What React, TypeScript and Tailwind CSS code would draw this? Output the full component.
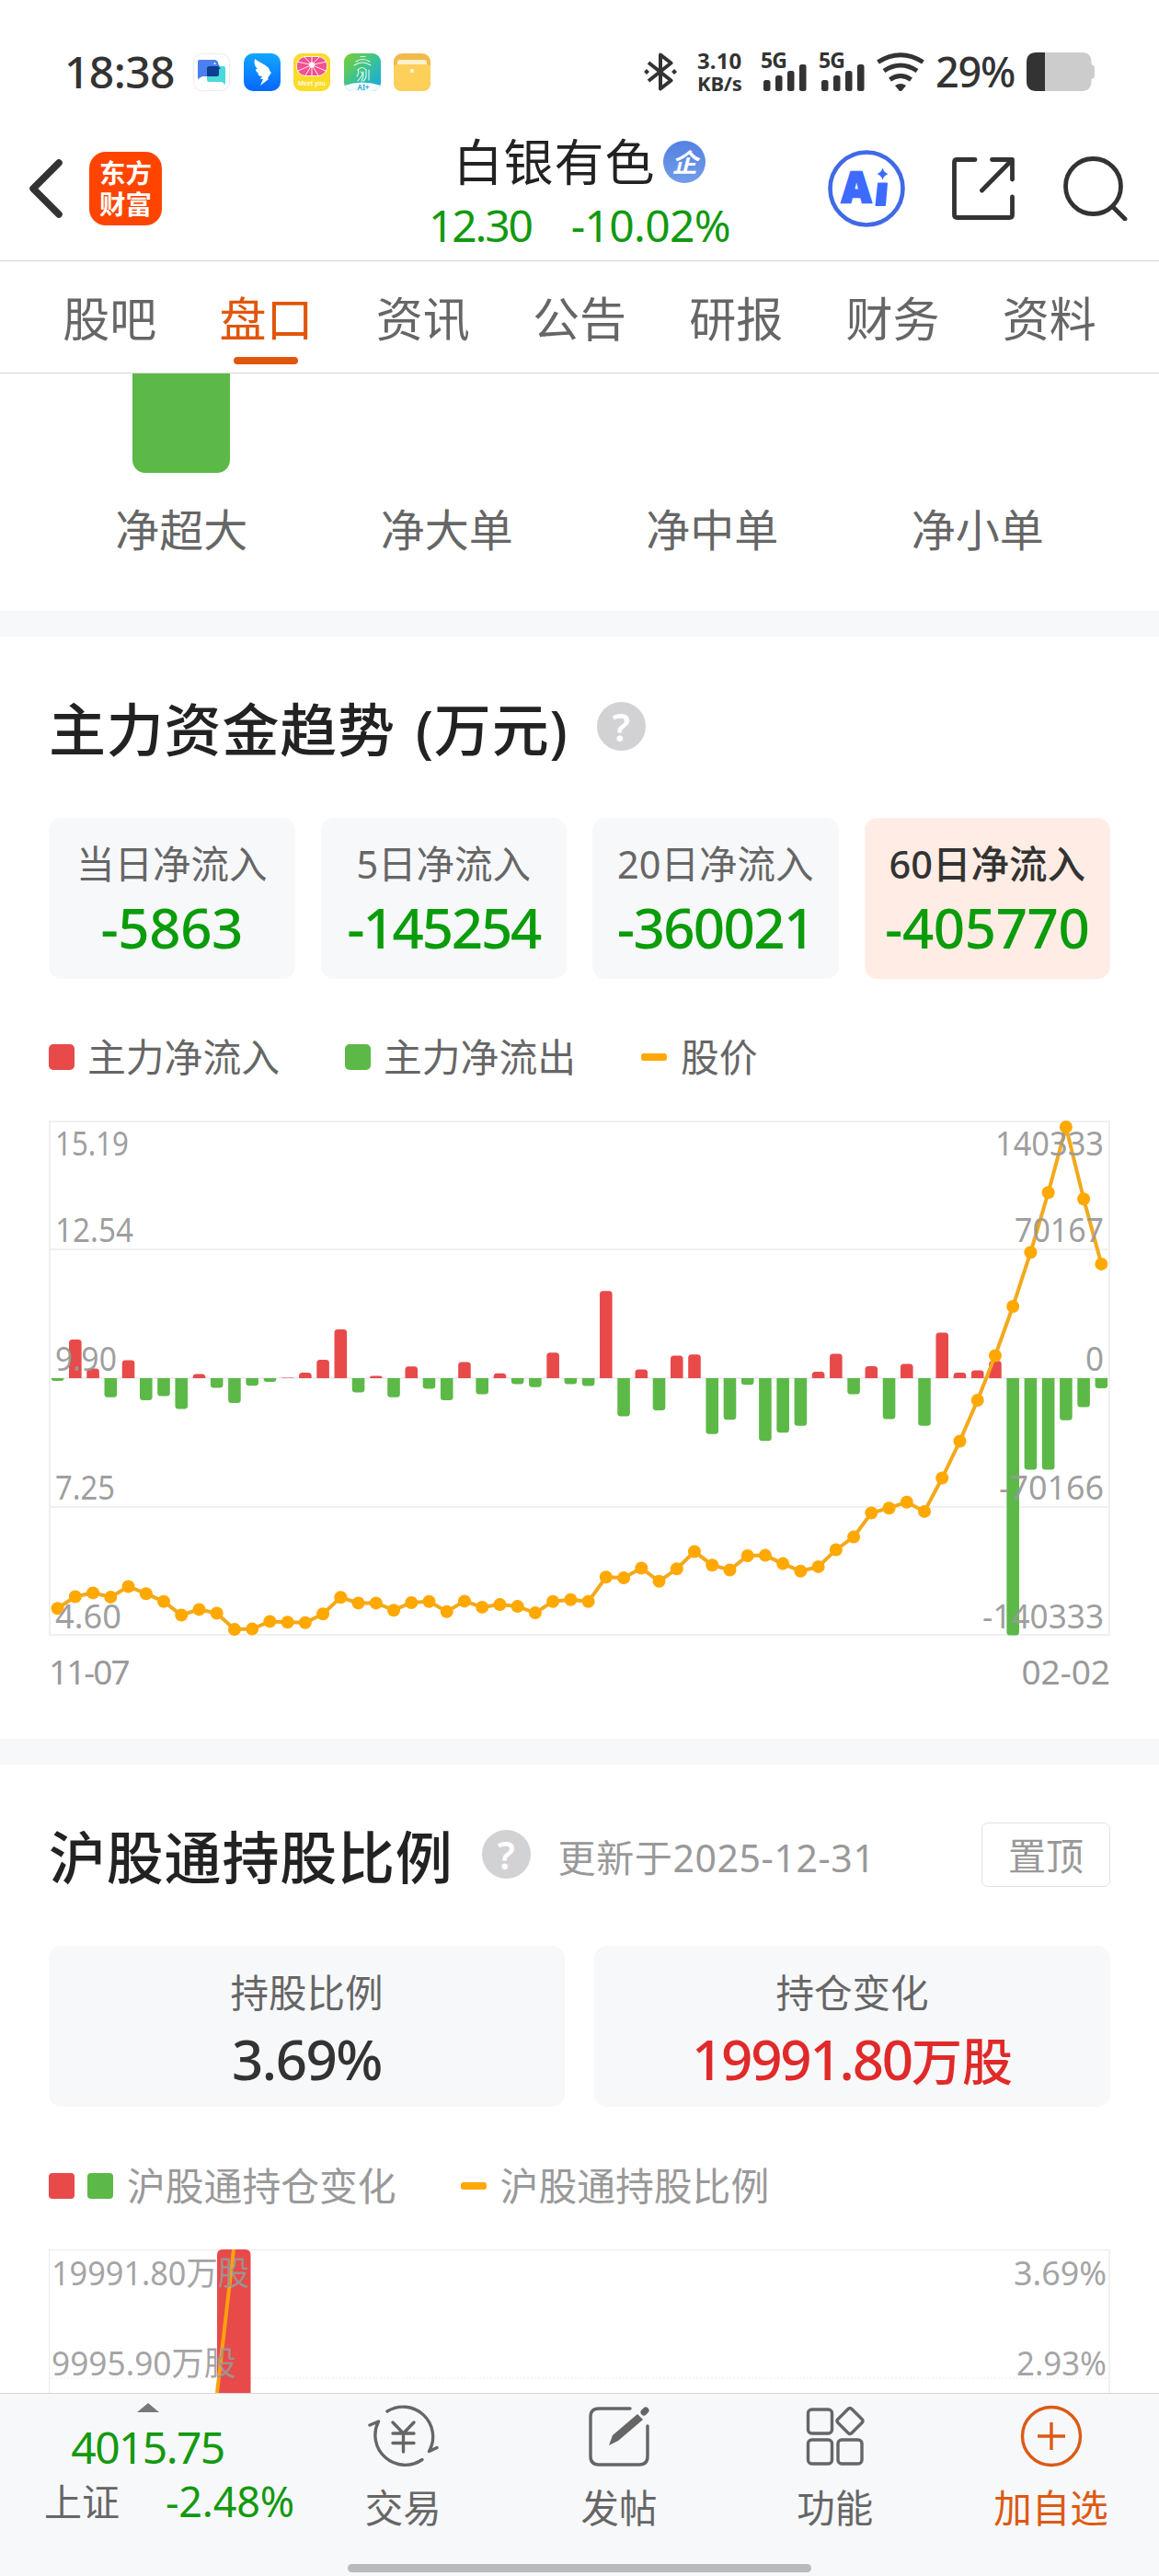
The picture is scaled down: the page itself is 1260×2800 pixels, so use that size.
import clsx from 'clsx';
import type { ReactNode } from 'react';

type Flow = { label: string; value: string; tracking: string; active?: boolean };

const TABS = ['股吧', '盘口', '资讯', '公告', '研报', '财务', '资料'];
const ORDER_SIZES = ['净超大', '净大单', '净中单', '净小单'];

const FLOWS: Flow[] = [
  { label: '当日净流入', value: '-5863', tracking: 'tracking-[-0.4px]' },
  { label: '5日净流入', value: '-145254', tracking: 'tracking-[-2.2px]' },
  { label: '20日净流入', value: '-360021', tracking: 'tracking-[-1.6px]' },
  { label: '60日净流入', value: '-405770', tracking: 'tracking-[-0.4px]', active: true },
];

// bar heights in chart pixels, positive = inflow
const BARS = [
  -2.9, 42, 10.6, -20.8, 19.6, -24, -19.6, -33.5, 4.5, -10.6, -26.9, -8.2, -4.1, 0.6, 6.1, 20, 53, -15.5, 2.4, -20.8,
  12.7, -11.4, -24, 17.6, -17.6, 5.3, -6.5, -9.8, 27.8, -6.5, -8.6, 94.7, -41.6, 9.4, -35.1, 24.5, 25.7, -60.8, -45.3, -7.3,
  -68.2, -59.2, -51.8, 6.9, 26.5, -17.6, 13.1, -44.5, 15.5, -51.8, 49.4, 6.1, 8.6, 18.8, -279.6, -99.6, -99.6, -45.7, -31.4, -11,
];

// y position of the share price for each day
const PRICE = [
  530.2, 517.5, 513.4, 517.9, 506.5, 514.2, 522.8, 537.5, 531.4, 535.5, 553, 552.6, 544.4, 545.3, 545.7, 536.3, 518.3, 524.4, 524.4, 532.2,
  524, 522.8, 533.8, 522.4, 528.9, 526.1, 528.1, 535.1, 522.8, 520.8, 522.8, 496.3, 497.1, 486.5, 500.8, 487.3, 468.5, 483.2, 488.5, 473,
  472.6, 481.6, 489.8, 484.9, 466.5, 452.6, 426.5, 421.2, 414.7, 424.9, 388.5, 348.5, 304, 255.5, 202, 143.2, 78.3, 6.9, 85.3, 155.9,
];

const AXIS = [
  { y: 38, left: '15.19', leftWidth: 80, right: '140333', rightWidth: 118 },
  { y: 132, left: '12.54', leftWidth: 85, right: '70167', rightWidth: 97 },
  { y: 272, left: '9.90', leftWidth: 67, right: '0', rightWidth: 20 },
  { y: 412, left: '7.25', leftWidth: 65, right: '-70166', rightWidth: 114 },
  { y: 552, left: '4.60', leftWidth: 72, right: '-140333', rightWidth: 132 },
];

const ZERO_Y = 280;
const dayX = (i: number) => 9.6 + i * 19.233;

function barPath(i: number, height: number): string {
  const x = dayX(i) - 6.8;
  const w = 13.6;
  const dir = height > 0 ? -1 : 1;
  const size = Math.abs(height);
  const r = Math.min(3.5, size);
  const end = ZERO_Y + dir * size;
  return `M${x} ${ZERO_Y}V${end - dir * r}Q${x} ${end} ${x + r} ${end}H${x + w - r}Q${x + w} ${end} ${x + w} ${end - dir * r}V${ZERO_Y}Z`;
}

function SignalBars() {
  return (
    <div className="flex h-[42px] w-[50px] flex-col">
      <span className="h-3 text-[23px] leading-[17px] font-bold tracking-[-0.8px]">5G</span>
      <svg viewBox="0 0 50 30" className="h-[30px] w-[50px] fill-[#333]">
        <rect x="3" y="18" width="7.5" height="12" rx="2.5" />
        <rect x="16" y="13" width="7.5" height="17" rx="2.5" />
        <rect x="29" y="8" width="7.5" height="22" rx="2.5" />
        <rect x="42" y="1" width="7.5" height="29" rx="2.5" />
      </svg>
    </div>
  );
}

function NotificationIcons() {
  return (
    <div className="ml-[21px] flex gap-[14.5px]">
      <svg viewBox="0 0 40 41" className="h-[41px] w-10">
        <rect x="0.5" y="0.5" width="39" height="40" rx="9" fill="#fff" stroke="#ececec" />
        <path d="M7 7h16q4 0 4.500 5l3 4v9H10l-5 3V9q0-2 2-2z" fill="#4b80ee" />
        <path d="M17 14h16q2 0 2 2v18l-4-3H17q-2 0-2-2V16q0-2 2-2z" fill="#4bd9dc" />
        <path d="M17 14h10.500l2.500 3h-2v6q0 2-2 2H15v-9q0-2 2-2z" fill="#0c3e94" />
        <circle cx="23.5" cy="11" r="1" fill="#fff" />
      </svg>
      <svg viewBox="0 0 40 41" className="h-[41px] w-10">
        <defs>
          <linearGradient id="wing" x1="0" y1="0" x2="0" y2="1">
            <stop offset="0" stopColor="#12a7ff" />
            <stop offset="1" stopColor="#0866ff" />
          </linearGradient>
        </defs>
        <rect width="40" height="41" rx="10" fill="url(#wing)" />
        <path d="M12 6c7 5 13 7 15 10 1 2 1 3 3 5l-4 6 1 1-9 7 3-7h-3l2-3c-3 0-4-1-5-3h2c-3-1-4-3-4-5h2c-3-3-4-6-3-11z" fill="#fff" />
      </svg>
      <svg viewBox="0 0 40 41" className="h-[41px] w-10">
        <rect width="40" height="41" rx="9" fill="#fbdc26" />
        <rect x="3" y="3" width="34" height="22" rx="10" fill="#fff4dc" />
        <rect x="4" y="4" width="32" height="20" rx="9" fill="#f5508f" />
        <path d="M20 12.500V4M20 12.500V24M20 12.500L4 9M20 12.500L36 9M20 12.500L5 19M20 12.500L35 19M20 12.500L12 4M20 12.500L28 4M20 12.500L13 24M20 12.500L27 24" stroke="#fff" strokeWidth="0.900" />
        <circle cx="20" cy="12.500" r="3" fill="#fff" />
        <text x="20" y="34.500" fontSize="7.500" fontWeight="600" fill="#fff" textAnchor="middle" textLength="30" lengthAdjust="spacingAndGlyphs">Meet you</text>
      </svg>
      <svg viewBox="0 0 40 41" className="h-[41px] w-10">
        <defs>
          <linearGradient id="finger" x1="0" y1="0" x2="1" y2="1">
            <stop offset="0" stopColor="#7ccf2d" />
            <stop offset="0.550" stopColor="#35c0a0" />
            <stop offset="1" stopColor="#15a3ec" />
          </linearGradient>
          <clipPath id="fingerClip">
            <rect width="40" height="41" rx="9" />
          </clipPath>
        </defs>
        <g clipPath="url(#fingerClip)">
          <rect width="40" height="41" fill="url(#finger)" />
          <path d="M0 35q20-7 40 0v6H0z" fill="#f4fbfd" />
        </g>
        <g fill="none" stroke="#e5faea" strokeWidth="1.100" strokeLinecap="round">
          <path d="M18 3.500h5M13 9q7-5 15 0M11 13q9-6 18 0M14 25q3-5 1-7 5-5 9 0v6q0 4-3 6M18 20q3 0 1 5l-4 5M27 18v11M21 20v5l-2 5" />
        </g>
        <text x="21" y="39.500" fontSize="8" fontWeight="600" fill="#1ba4d8" textAnchor="middle">AI+</text>
      </svg>
      <svg viewBox="0 0 40 41" className="h-[41px] w-10">
        <rect width="40" height="41" rx="9" fill="#f1ba4a" />
        <rect x="4" y="7" width="32" height="12" rx="3" fill="#fdf0cc" />
        <path d="M0 15q0-3 4-3h32q4 0 4 3v17q0 9-9 9H9q-9 0-9-9z" fill="#fed05a" />
        <circle cx="20" cy="19" r="2.200" fill="#fff3d0" />
      </svg>
    </div>
  );
}

function StatusBar() {
  return (
    <div className="flex h-[156px] items-center pr-[69px] pl-[70px] text-[#333]">
      <span className="w-[119px] text-[48px] leading-[60px] font-medium tracking-[-0.6px] whitespace-nowrap">18:38</span>
      <NotificationIcons />
      <svg viewBox="0 0 36 42" className="ml-auto h-[42px] w-9" fill="none" stroke="#333" strokeWidth="4" strokeLinejoin="round">
        <path d="M5 11l24.500 19.500L18 39.500v-37l11.500 9L5 31" />
        <path d="M3 18l3 3-3 3-3-3zM33 18l3 3-3 3-3-3z" fill="#333" stroke="none" />
      </svg>
      <div className="ml-[22px] flex w-[50px] flex-col text-[24px] leading-[24px] font-bold whitespace-nowrap">
        <span className="tracking-[0.100px]">3.10</span>
        <span className="text-[22px] tracking-[-0.200px]">KB/s</span>
      </div>
      <div className="ml-[19px] flex gap-[13px]">
        <SignalBars />
        <SignalBars />
      </div>
      <svg viewBox="0 0 52 42" className="ml-[13px] h-[42px] w-[52px]" fill="none" stroke="#333" strokeWidth="5">
        <path d="M1.500 10.500Q26-5 50.500 10.500" />
        <path d="M8 20Q26 8 44 20" />
        <path d="M14.500 29.500Q26 21.500 37.500 29.500" />
        <path d="M20 36q6-4 12 0l-4.500 5.500q-1.500 1-3 0z" fill="#333" stroke="none" />
      </svg>
      <span className="ml-3 w-[87px] text-[45px] leading-[60px] font-medium tracking-[-1.200px] whitespace-nowrap">29%</span>
      <svg viewBox="0 0 75 42" className="ml-[12px] h-[42px] w-[75px]">
        <path d="M11 0h49q10.500 0 10.500 11v2q3.500 1 3.500 4v8q0 3-3.500 4v2q0 11-10.500 11H11q-11 0-11-11V11Q0 0 11 0z" fill="#ccc" />
        <path d="M11 0h9v42h-9q-11 0-11-11V11Q0 0 11 0z" fill="#333" />
      </svg>
    </div>
  );
}

function Header() {
  return (
    <header className="grid h-[128px] grid-cols-[400px_460px_400px] grid-rows-[98px] items-center border-b border-[#d6d6d6]">
      <div className="flex items-center pl-[30px]">
        <svg viewBox="0 0 40 66" className="h-[66px] w-10" fill="none" stroke="#333" strokeWidth="7.500" strokeLinecap="round" strokeLinejoin="round">
          <path d="M34 5L6 33l28 28" />
        </svg>
        <div className="ml-[27px] flex h-20 w-[79px] flex-col items-center justify-center rounded-[18px] bg-[#ff4400] text-[28.5px] leading-[34px] font-bold text-white">
          <span>东方</span>
          <span>财富</span>
        </div>
      </div>
      <div className="-mt-[12px] flex flex-col items-center self-start whitespace-nowrap">
        <div className="flex h-16 items-center">
          <span className="text-[54px] leading-[64px] tracking-[0.900px] text-[#222]">白银有色</span>
          <span className="ml-[9px] flex size-[46px] items-center justify-center rounded-full bg-linear-to-b from-[#5480e2] to-[#729de9] text-[28px] leading-none font-bold text-white italic">
            企
          </span>
        </div>
        <div className="flex gap-[43px] text-[48px] leading-[73px] text-[#12990f]">
          <span className="tracking-[-2.200px]">12.30</span>
          <span className="tracking-[-0.700px]">-10.02%</span>
        </div>
      </div>
      <div className="flex items-center pl-10">
        <svg viewBox="0 0 84 84" className="size-[84px]">
          <circle cx="42" cy="42" r="39.500" fill="none" stroke="#4069e8" strokeWidth="4.600" />
          <text x="15" y="57" fontSize="46" fontWeight="900" fill="#3d6bff" stroke="#3d6bff" strokeWidth="2.500" textLength="32" lengthAdjust="spacingAndGlyphs">A</text>
          <path d="M55 36.500h9l-2 23.500H52.500z" fill="#3d6bff" stroke="#3d6bff" strokeWidth="2" strokeLinejoin="round" />
          <path d="M59.500 19.500q1.500 5 6 6.500-4.500 1.500-6 6.500-1.500-5-6-6.500 4.500-1.500 6-6.500z" fill="#3d6bff" />
        </svg>
        <svg viewBox="0 0 68 68" className="ml-[51px] size-[68px]" fill="none" stroke="#333" strokeWidth="4.800" strokeLinecap="round" strokeLinejoin="round">
          <path d="M25 2.500H5.500q-3 0-3 3v57q0 3 3 3h57q3 0 3-3V43M43.500 2.500h22V24M65 3L32.500 36" />
        </svg>
        <svg viewBox="0 0 70 70" className="ml-[53px] size-[70px]" fill="none" stroke="#333" strokeWidth="4.800" strokeLinecap="round">
          <circle cx="32.500" cy="32.500" r="30" />
          <path d="M54 55l13 13" />
        </svg>
      </div>
    </header>
  );
}

function TabBar() {
  return (
    <nav className="grid h-[122px] grid-cols-7 border-b border-[#d6d6d6] px-[34px] pt-8">
      {TABS.map((tab) => {
        const active = tab === '盘口';
        return (
          <div key={tab} className="flex flex-col items-center">
            <span className={clsx('text-[51px] leading-[61px]', active ? 'text-[#e0560b]' : 'text-[#666]')}>{tab}</span>
            {active ? <span className="mt-[11px] h-2 w-[70px] rounded-full bg-[#e0560b]" /> : null}
          </div>
        );
      })}
    </nav>
  );
}

function SectionTitle({ title, children }: { title: string; children?: ReactNode }) {
  return (
    <div className="flex h-20 items-center whitespace-nowrap">
      <h2 className="text-[62px] leading-[80px] font-medium tracking-[0.800px] text-[#222] [word-spacing:5px]">{title}</h2>
      <span className="mb-[7px] ml-[31px] flex size-[53px] shrink-0 items-center justify-center rounded-full bg-[#d2d2d4] text-[42px] leading-none font-semibold text-white">
        ?
      </span>
      {children}
    </div>
  );
}

function Dash() {
  return <span className="h-2 w-7 rounded-[3px] bg-[#ffa80a]" />;
}

function FlowTrendChart() {
  return (
    <svg viewBox="0 0 1154 560" className="mt-11 h-[560px] w-[1154px] overflow-visible">
      <g fill="none" stroke="#f0f0f0" strokeWidth="2">
        <rect x="1" y="1" width="1152" height="558" />
        <path d="M0 140H1154M0 280H1154M0 420H1154" />
      </g>
      {BARS.map((height, i) => (
        <path key={i} d={barPath(i, height)} fill={height > 0 ? '#e84a4a' : '#5cb947'} />
      ))}
      <polyline points={PRICE.map((y, i) => `${dayX(i)},${y}`).join(' ')} fill="none" stroke="#f3a91c" strokeWidth="4" />
      {PRICE.map((y, i) => (
        <circle key={i} cx={dayX(i)} cy={y} r="7" fill="#ffa800" />
      ))}
      <g fill="#999" fillOpacity="0.950" fontSize="37">
        {AXIS.map((row) => (
          <g key={row.y}>
            <text x="7" y={row.y} textLength={row.leftWidth} lengthAdjust="spacingAndGlyphs">{row.left}</text>
            <text x="1147" y={row.y} textAnchor="end" textLength={row.rightWidth} lengthAdjust="spacingAndGlyphs">{row.right}</text>
          </g>
        ))}
      </g>
    </svg>
  );
}

function FundTrend() {
  return (
    <section className="h-[1198px] px-[53px] pt-[61px]">
      <SectionTitle title="主力资金趋势 (万元)" />
      <div className="mt-14 grid grid-cols-4 gap-7">
        {FLOWS.map((flow) => (
          <div
            key={flow.label}
            className={clsx('flex h-[175px] flex-col items-center rounded-[14px] pt-[25px] whitespace-nowrap', flow.active ? 'bg-[#ffede5]' : 'bg-[#f7f8fa]')}
          >
            <span className={clsx('text-[41.5px] leading-[50px]', flow.active ? 'font-medium text-[#333]' : 'text-[#666]')}>{flow.label}</span>
            <span className={clsx('mt-[9px] text-[60px] leading-[70px] font-medium text-[#0a9c0a]', flow.tracking)}>{flow.value}</span>
          </div>
        ))}
      </div>
      <div className="mt-[60px] flex h-[50px] items-center text-[41.800px] leading-[50px] text-[#666]">
        <span className="size-7 rounded-[5px] bg-[#e84a4a]" />
        <span className="ml-3.5">主力净流入</span>
        <span className="ml-[71px] size-7 rounded-[5px] bg-[#5cb947]" />
        <span className="mr-[71px] ml-3.5">主力净流出</span>
        <Dash />
        <span className="ml-[15px]">股价</span>
      </div>
      <FlowTrendChart />
      <div className="flex justify-between text-[37px] leading-[78px] text-[#999]">
        <span className="tracking-[-2px]">11-07</span>
        <span>02-02</span>
      </div>
    </section>
  );
}

function StockConnect() {
  return (
    <section className="h-[683px] overflow-hidden px-[53px] pt-[61px]">
      <SectionTitle title="沪股通持股比例">
        <span className="ml-[30px] text-[41px] leading-[50px] tracking-[0.600px] text-[#999]">更新于2025-12-31</span>
        <span className="mb-1.5 ml-auto flex h-[70px] w-[140px] items-center justify-center rounded-[7px] border border-[#e2e2e2] pt-0.5 text-[41px] leading-[50px] text-[#999]">
          置顶
        </span>
      </SectionTitle>
      <div className="mt-14 grid grid-cols-2 gap-8 text-[41.500px] leading-[50px] text-[#666]">
        <div className="flex h-[175px] flex-col items-center rounded-[14px] bg-[#f7f8fa] pt-[26px]">
          <span>持股比例</span>
          <span className="mt-[12px] text-[60px] leading-[70px] font-medium tracking-[-1.500px] text-[#333]">3.69%</span>
        </div>
        <div className="flex h-[175px] flex-col items-center rounded-[14px] bg-[#f7f8fa] pt-[26px]">
          <span>持仓变化</span>
          <span className="mt-[12px] text-[60px] leading-[70px] font-medium tracking-[-2.200px] text-[#e02a2a]">
            19991.80<span className="text-[55px] tracking-normal">万股</span>
          </span>
        </div>
      </div>
      <div className="mt-[61px] flex h-[50px] items-center text-[41.800px] leading-[50px] text-[#999]">
        <span className="size-7 rounded-[4px] bg-[#e84a4a]" />
        <span className="ml-3.5 size-7 rounded-[4px] bg-[#5cb947]" />
        <span className="mr-[70px] ml-[15px]">沪股通持仓变化</span>
        <Dash />
        <span className="ml-[15px]">沪股通持股比例</span>
      </div>
      <svg viewBox="0 0 1154 156" className="mt-11 h-[156px] w-[1154px]">
        <path d="M0.500 156V0.500H1153V156" fill="none" stroke="#ededed" strokeWidth="1.500" />
        <path d="M0 140H1153" stroke="#ebebeb" strokeDasharray="2 2" />
        <path d="M183 156V6q0-6 6-6h24.500q6 0 6 6v150z" fill="#e84a4a" />
        <path d="M201 0L183 156" stroke="#ffa10e" strokeWidth="4" />
        <g fill="#999" fillOpacity="0.900" fontSize="36">
          <text x="3" y="39" textLength="215" lengthAdjust="spacingAndGlyphs">19991.80万股</text>
          <text x="3" y="137" textLength="201" lengthAdjust="spacingAndGlyphs">9995.90万股</text>
          <text x="1150" y="39" textAnchor="end" textLength="101" lengthAdjust="spacingAndGlyphs">3.69%</text>
          <text x="1150" y="137" textAnchor="end" textLength="98" lengthAdjust="spacingAndGlyphs">2.93%</text>
        </g>
      </svg>
    </section>
  );
}

function Action({ label, accent, children }: { label: string; accent?: boolean; children: ReactNode }) {
  return (
    <div className={clsx('flex flex-col items-center pt-3', accent ? 'text-[#dc5a14]' : 'text-[#666]')}>
      <svg viewBox="0 0 78 68" className="h-[68px] w-[78px]" fill="none" stroke="currentColor" strokeWidth="3.400" strokeLinecap="round" strokeLinejoin="round">
        {children}
      </svg>
      <span className="mt-[14px] text-[41.500px] leading-[60px]">{label}</span>
    </div>
  );
}

function BottomBar() {
  return (
    <footer className="flex h-[199px] flex-col border-t border-[#d6d6d6] bg-[#f7f8fa]">
      <div className="grid h-[185px] grid-cols-[321px_repeat(4,234.75px)]">
        <div className="flex flex-col items-center pt-[10px] whitespace-nowrap">
          <svg viewBox="0 0 24 10" className="h-[10px] w-6 fill-[#77787a]">
            <path d="M0 10L12 0l12 10z" />
          </svg>
          <span className="mt-[8px] text-[48px] leading-[60px] tracking-[-1.6px] text-[#12990f]">4015.75</span>
          <div className="flex w-full items-center justify-between pr-px pl-12 leading-[58px]">
            <span className="text-[41px] text-[#666]">上证</span>
            <span className="text-[45px] tracking-[-0.200px] text-[#12990f]">-2.48%</span>
          </div>
        </div>
        <Action label="交易">
          <path d="M22 7A32.500 32.500 0 0 1 67.500 50.500L76 46.500M60 59.500A32.500 32.500 0 0 1 12.500 18L3 22" />
          <path d="M28 19l11.500 12 11.500-12M39.500 31v20M28 31h23M28 41.500h23" />
        </Action>
        <Action label="发帖">
          <path d="M51 4H17q-9 0-9 9v43q0 9 9 9h44q9 0 9-9V23" />
          <path d="M28 44l4-11 27-23 6 6-27 23z" fill="currentColor" stroke="none" />
          <path d="M66 8l2-2" strokeWidth="7" />
        </Action>
        <Action label="功能">
          <rect x="9.500" y="5" width="26" height="26" rx="4" />
          <rect x="9.500" y="38" width="26" height="26" rx="4" />
          <rect x="42" y="38" width="26" height="26" rx="4" />
          <path d="M53 4.500q2-2 4 0l11 11q2 2 0 4l-11 11q-2 2-4 0l-11-11q-2-2 0-4z" />
        </Action>
        <Action label="加自选" accent>
          <circle cx="39" cy="34" r="31.500" />
          <path d="M39 19v30M24 34h30" strokeLinecap="butt" />
        </Action>
      </div>
      <div className="mx-auto h-[9px] w-[504px] rounded-full bg-[#b9babc]" />
    </footer>
  );
}

export default function App() {
  return (
    <div className="h-[2800px] w-[1260px] overflow-hidden bg-white font-['Noto_Sans','Noto_Sans_CJK_SC',sans-serif]">
      <StatusBar />
      <Header />
      <TabBar />
      <section className="grid h-[258px] grid-cols-4 px-[53px]">
        {ORDER_SIZES.map((name, i) => (
          <div key={name} className="flex flex-col items-center">
            <div className={clsx('h-[108px] w-[106px] rounded-b-[14px]', i === 0 && 'bg-[#5cb947]')} />
            <span className="mt-[32px] text-[48px] leading-[60px] text-[#666]">{name}</span>
          </div>
        ))}
      </section>
      <div className="h-7 bg-[#f7f8fa]" />
      <FundTrend />
      <div className="h-7 bg-[#f7f8fa]" />
      <StockConnect />
      <BottomBar />
    </div>
  );
}
